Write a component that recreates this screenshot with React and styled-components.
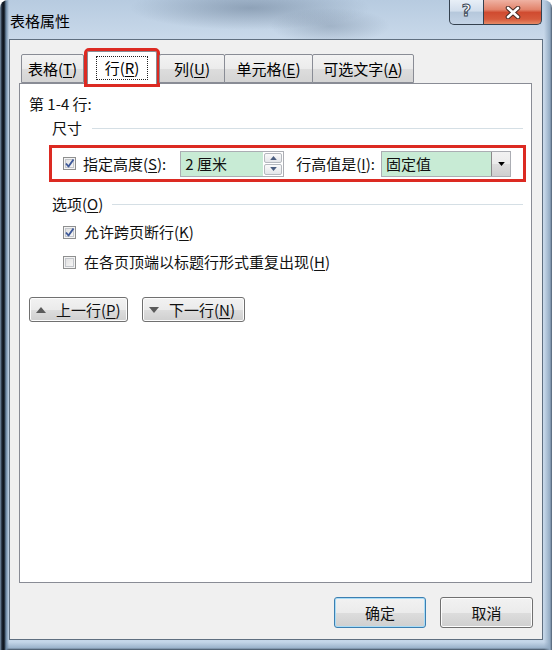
import React from 'react';
import styled, { createGlobalStyle } from 'styled-components';

const GlobalStyle = createGlobalStyle`
  html, body { margin: 0; padding: 0; background: #fff; }
  body { font-family: "Noto Sans CJK SC", "Microsoft YaHei", sans-serif; color: #111; }
  u { text-underline-offset: 2px; text-decoration-thickness: 1px; }
`;

const RED = '#dc2a22';
const GREEN = '#c8ebd5';

const Window = styled.div`
  width: 552px;
  height: 650px;
  box-sizing: border-box;
  display: flex;
  flex-direction: column;
  padding: 0 9px 10px 9px;
  border-radius: 8px 8px 0 0;
  background:
    linear-gradient(to right, #7d95ad 0, #1a2330 2px, #0c131b 4px, #6a86a2 6px, rgba(183, 204, 224, 0) 9px),
    linear-gradient(to left, #4c5d70 0, #93abc3 2px, rgba(183, 204, 224, 0) 8px),
    linear-gradient(to top, #3d4c5c 0, #9ab2ca 2px, rgba(183, 204, 224, 0) 8px),
    radial-gradient(ellipse 120px 22px at 250px 8px, rgba(60, 80, 105, 0.35), rgba(60, 80, 105, 0)),
    radial-gradient(ellipse 60px 18px at 330px 26px, rgba(60, 80, 105, 0.25), rgba(60, 80, 105, 0)),
    linear-gradient(to bottom, #b7cbe0 0, #c9d9ea 40px, #c4d6e8 100%);
`;

const TitleBar = styled.div`
  height: 39px;
  display: flex;
  justify-content: space-between;
  align-items: flex-start;
`;

const Title = styled.div`
  margin: 11px 0 0 1px;
  font-size: 15px;
  line-height: 20px;
  color: #000;
`;

const Captions = styled.div`
  display: flex;
  margin-right: 1px;
`;

const CaptionBtn = styled.div`
  width: ${p => p.w}px;
  height: 25px;
  box-sizing: border-box;
  display: flex;
  align-items: center;
  justify-content: center;
  border: 1px solid #34414f;
  border-top: none;
  background: ${p => p.close
    ? 'linear-gradient(#efb2a3 0%, #e2836b 40%, #d04b30 52%, #d65a3c 80%, #e68a66 100%)'
    : 'linear-gradient(#e8eff7 0%, #d2deec 45%, #b6c8dc 52%, #c4d4e6 100%)'};
  border-radius: ${p => p.close ? '0 0 5px 0' : '0 0 0 5px'};
  ${p => p.close ? 'border-left: none;' : ''}
`;

const HelpGlyph = styled.span`
  font-family: "DejaVu Sans", sans-serif;
  font-weight: bold;
  font-size: 16px;
  line-height: 1;
  color: #fff;
  -webkit-text-stroke: 1px #3b4858;
  margin-top: -2px;
`;

const Client = styled.div`
  flex: 1;
  display: flex;
  flex-direction: column;
  background: #f0f0f0;
  border: 1px solid #5f6f80;
  padding: 11px 10px 11px 9px;
`;

const TabStrip = styled.div`
  display: flex;
  align-items: flex-end;
  padding-left: 3px;
  position: relative;
  z-index: 1;
  margin-bottom: -1px;
`;

const Tab = styled.div`
  width: ${p => p.w}px;
  height: ${p => p.active ? 33 : 29}px;
  box-sizing: border-box;
  display: flex;
  align-items: center;
  justify-content: center;
  border: 1px solid #898c95;
  border-bottom: ${p => p.active ? 'none' : '1px solid #898c95'};
  margin: ${p => p.active ? '0 3px' : '0 0 1px -1px'};
  background: ${p => p.active ? '#fff' : 'linear-gradient(#f3f3f3 0%, #ebebeb 50%, #dddddd 51%, #d4d4d4 100%)'};
  border-radius: 2px 2px 0 0;
  font-size: 15px;
  line-height: 20px;
  color: #000;
  padding-top: ${p => p.active ? 0 : 1}px;
  outline: ${p => p.marked ? `3px solid ${RED}` : 'none'};
`;

const Focus = styled.span`
  border: 1px dotted #222;
  padding: 1px 8px;
`;

const Panel = styled.div`
  flex: 1;
  background: #fff;
  border: 1px solid #898c95;
  padding: 10px 8px 0 9px;
  font-size: 15px;
  line-height: 20px;
  color: #111;
`;

const Line = styled.div`
  height: 20px;
  white-space: nowrap;
`;

const GroupHeader = styled.div`
  display: flex;
  align-items: center;
  height: 20px;
  margin: ${p => p.top}px 0 0 23px;

  &::after {
    content: '';
    flex: 1;
    height: 1px;
    background: #d5dfe5;
    margin-left: ${p => p.gap}px;
  }
`;

const MarkedRow = styled.div`
  height: 37px;
  box-sizing: border-box;
  margin: 7px -3px 0 20px;
  border: 3px solid ${RED};
  display: flex;
  align-items: center;
  padding-left: 11px;
`;

const Box = styled.span`
  width: 13px;
  height: 13px;
  box-sizing: border-box;
  border: 1px solid #8e8f8f;
  background: linear-gradient(135deg, #dcdcdc 0%, #fbfbfb 100%);
  box-shadow: inset 0 0 0 1px #f4f4f4, inset 0 0 0 2px #c3c6cb;
  display: inline-flex;
  align-items: center;
  justify-content: center;
  flex-shrink: 0;
`;

const Label = styled.span`
  margin-left: ${p => p.ml || 0}px;
  white-space: nowrap;
`;

const Spin = styled.div`
  margin-left: 14px;
  width: 104px;
  height: 26px;
  box-sizing: border-box;
  border: 1px solid #abadb3;
  display: flex;
  background: #fff;
`;

const Field = styled.div`
  flex: 1;
  background: ${GREEN};
  padding-left: 4px;
  display: flex;
  align-items: center;
  white-space: nowrap;
`;

const SpinBtns = styled.div`
  width: 20px;
  display: flex;
  flex-direction: column;
  padding: 1px;
  gap: 1px;
  box-sizing: border-box;
`;

const SpinBtn = styled.div`
  flex: 1;
  border: 1px solid #b5b9bf;
  border-radius: 2px;
  background: linear-gradient(#fafafa, #e4e6e9);
  display: flex;
  align-items: center;
  justify-content: center;
`;

const Select = styled.div`
  margin-left: 6px;
  width: 130px;
  height: 26px;
  box-sizing: border-box;
  border: 1px solid #abadb3;
  display: flex;
  background: ${GREEN};
`;

const DropBtn = styled.div`
  width: 19px;
  box-sizing: border-box;
  border-left: 1px solid #8a8a8a;
  background: linear-gradient(#f2f2f2 0%, #ebebeb 50%, #dddddd 51%, #cfcfcf 100%);
  display: flex;
  align-items: center;
  justify-content: center;
`;

const CheckRow = styled.div`
  display: flex;
  align-items: center;
  gap: 8px;
  height: 20px;
  margin: ${p => p.top}px 0 0 34px;
`;

const NavRow = styled.div`
  display: flex;
  gap: 14px;
  margin-top: 25px;
`;

const Button = styled.div`
  width: ${p => p.w}px;
  height: ${p => p.h || 25}px;
  box-sizing: border-box;
  border: 1px solid ${p => p.primary ? '#3c7fb1' : '#707070'};
  border-radius: 3px;
  background: linear-gradient(#f2f2f2 0%, #ebebeb 50%, #dddddd 51%, #cfcfcf 100%);
  box-shadow: inset 0 0 0 1px ${p => p.primary ? '#a9dcf6' : '#fcfcfc'};
  display: flex;
  align-items: center;
  justify-content: ${p => p.icon ? 'flex-start' : 'center'};
  padding-left: ${p => p.icon ? 6 : 0}px;
  gap: 10px;
  font-size: 15px;
  line-height: 20px;
  color: #111;
  white-space: nowrap;
`;

const Footer = styled.div`
  display: flex;
  justify-content: flex-end;
  gap: 14px;
  margin: 14px -1px 0 0;
`;

const Check = () => (
  <svg width="11" height="11" viewBox="0 0 11 11">
    <path d="M2 5.5 L4.5 8.5 L9.5 1.5" fill="none" stroke="#3d5899" strokeWidth="1.9" strokeLinejoin="round" />
  </svg>
);

const Tri = ({ down, w = 10, h = 6, color = '#5a5a5a' }) => (
  <svg width={w} height={h} viewBox="0 0 10 6">
    <path d={down ? 'M0 0 L10 0 L5 6 Z' : 'M0 6 L10 6 L5 0 Z'} fill={color} />
  </svg>
);

const CloseX = () => (
  <svg width="16" height="13" viewBox="0 0 16 13">
    <path d="M3 2 L13 11 M13 2 L3 11" stroke="#4a2a24" strokeWidth="4.6" strokeLinecap="round" />
    <path d="M3 2 L13 11 M13 2 L3 11" stroke="#fff" strokeWidth="2.6" strokeLinecap="round" />
  </svg>
);

export default function App() {
  return (
    <>
      <GlobalStyle />
      <Window>
        <TitleBar>
          <Title>表格属性</Title>
          <Captions>
            <CaptionBtn w={35}><HelpGlyph>?</HelpGlyph></CaptionBtn>
            <CaptionBtn w={58} close><CloseX /></CaptionBtn>
          </Captions>
        </TitleBar>
        <Client>
          <TabStrip>
            <Tab w={63}>表格(<u>T</u>)</Tab>
            <Tab w={70} active marked><Focus>行(<u>R</u>)</Focus></Tab>
            <Tab w={66}>列(<u>U</u>)</Tab>
            <Tab w={89}>单元格(<u>E</u>)</Tab>
            <Tab w={102}>可选文字(<u>A</u>)</Tab>
          </TabStrip>
          <Panel>
            <Line>第 1-4 行:</Line>
            <GroupHeader top={4} gap={10}>尺寸</GroupHeader>
            <MarkedRow>
              <Box><Check /></Box>
              <Label ml={7}>指定高度(<u>S</u>):</Label>
              <Spin>
                <Field>2 厘米</Field>
                <SpinBtns>
                  <SpinBtn><Tri w={7} h={4} color="#4b5e80" /></SpinBtn>
                  <SpinBtn><Tri down w={7} h={4} color="#4b5e80" /></SpinBtn>
                </SpinBtns>
              </Spin>
              <Label ml={12}>行高值是(<u>I</u>):</Label>
              <Select>
                <Field>固定值</Field>
                <DropBtn><Tri down w={7} h={4} color="#000" /></DropBtn>
              </Select>
            </MarkedRow>
            <GroupHeader top={12} gap={9}>选项(<u>O</u>)</GroupHeader>
            <CheckRow top={8}>
              <Box><Check /></Box>
              <Label>允许跨页断行(<u>K</u>)</Label>
            </CheckRow>
            <CheckRow top={10}>
              <Box />
              <Label>在各页顶端以标题行形式重复出现(<u>H</u>)</Label>
            </CheckRow>
            <NavRow>
              <Button w={99} icon><Tri /><Label>上一行(<u>P</u>)</Label></Button>
              <Button w={103} icon><Tri down /><Label>下一行(<u>N</u>)</Label></Button>
            </NavRow>
          </Panel>
          <Footer>
            <Button w={92} h={31} primary>确定</Button>
            <Button w={93} h={31}>取消</Button>
          </Footer>
        </Client>
      </Window>
    </>
  );
}
